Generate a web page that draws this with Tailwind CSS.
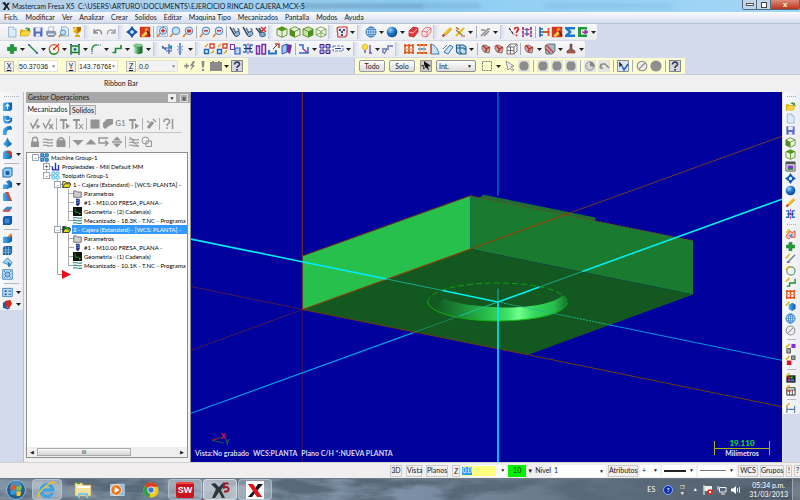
<!DOCTYPE html>
<html lang="es">
<head>
<meta charset="utf-8">
<title>Mastercam Fresa X5</title>
<script src="https://cdn.jsdelivr.net/npm/@tailwindcss/browser@4"></script>
</head>
<body class="flex h-screen flex-col overflow-hidden bg-[#f0f0f0] font-[Lato,sans-serif] text-[7px] leading-[9px] text-[#1a1a1a]">

<svg class="absolute size-0" aria-hidden="true">
  <defs>
    <radialGradient id="gBlue" cx=".35" cy=".3" r=".8"><stop offset="0" stop-color="#9fd4f8"/><stop offset=".5" stop-color="#1c72c4"/><stop offset="1" stop-color="#0a3f86"/></radialGradient>
    <linearGradient id="gSolid" x1="0" x2="1"><stop offset="0" stop-color="#4ab4f4"/><stop offset="1" stop-color="#0a58a8"/></linearGradient>
    <linearGradient id="gGreen" x1="0" x2="1"><stop offset="0" stop-color="#d8f0d8"/><stop offset=".6" stop-color="#2f8a45"/><stop offset="1" stop-color="#1b5c2b"/></linearGradient>
  </defs>
  <symbol id="new" viewBox="0 0 12 12"><path d="M2.500 1h5l2.500 2.500V11h-7.500z" fill="#dcecfb" stroke="#8aa9cc" stroke-width=".8"/><path d="M7.500 1v2.500H10" fill="#fff" stroke="#8aa9cc" stroke-width=".7"/></symbol>
  <symbol id="open" viewBox="0 0 12 12"><path d="M1 10V3.500h3l1 1h4V6" fill="#e5b21b"/><path d="M1 10l2-5h8.500l-2.500 5z" fill="#ffd83c" stroke="#b88a10" stroke-width=".5"/><path d="M6 3c1-2 3-2 4-.5l1-.8V5H8l1-1C8 3 7 3 6 3z" fill="#3c9a2a"/></symbol>
  <symbol id="save" viewBox="0 0 12 12"><path d="M1.500 1.500h9v9h-9z" fill="#5a6bc4"/><path d="M3.500 1.500h5v4h-5zM4 7.500h4v3H4z" fill="#e8ecfa"/></symbol>
  <symbol id="print" viewBox="0 0 12 12"><path d="M3 5l1-4h5l-1 4z" fill="#fff" stroke="#7b93b5" stroke-width=".6"/><path d="M1 5h9.500l1 3-2.500 3H3L1 8z" fill="#8c98a8"/><path d="M3 7.500h6v1.500H3z" fill="#dde4ec"/></symbol>
  <symbol id="preview" viewBox="0 0 12 12"><path d="M3.500.8h5l2 2V10h-7z" fill="#e2effb" stroke="#7c9cc4" stroke-width=".8"/><circle cx="5" cy="6.500" r="2.600" fill="#bfe0f8" stroke="#4a80b8" stroke-width=".9"/><path d="M3 8.500L1 11" stroke="#c87d2c" stroke-width="1.500"/></symbol>
  <symbol id="cup" viewBox="0 0 12 12"><path d="M2 1h8v3c0 2-2 3-3 3.500V9h2v2H4V9h1.500V7.500C3 7 2 5 2 4z" fill="#e8a70c"/><path d="M6 1h4v3L7 7z" fill="#a86a04"/><path d="M1 6l4-4" stroke="#ffef7a" stroke-width="1.200"/></symbol>
  <symbol id="undo" viewBox="0 0 12 12"><path d="M2 3v4h4M2.500 6.500C4 3 10 3 9.500 8.500" fill="none" stroke="#8c8c8c" stroke-width="1.400"/></symbol>
  <symbol id="redo" viewBox="0 0 12 12"><path d="M10 3v4H6M9.500 6.500C8 3 2 3 2.500 8.500" fill="none" stroke="#a0a0a0" stroke-width="1.400"/></symbol>
  <symbol id="fit" viewBox="0 0 12 12"><path d="M6 0l2.500 3.500L12 6 8.500 8.500 6 12 3.500 8.500 0 6l3.500-2.500z" fill="#1557b0"/><circle cx="6" cy="6" r="1.800" fill="#d7ecff"/></symbol>
  <symbol id="repaint" viewBox="0 0 12 12"><path d="M.8.8h10.400v10.400H.8z" fill="#d8331c"/><path d="M2 10l5-5 2 2-4 4z" fill="#ffd04a"/><circle cx="7.500" cy="3.800" r="2" fill="#f38a2c"/><path d="M8 5l3 5" stroke="#7a120a" stroke-width="1.500"/></symbol>
  <symbol id="zoom" viewBox="0 0 12 12"><circle cx="7" cy="4.800" r="3.800" fill="#bfe2f8" stroke="#4d86bd" stroke-width="1"/><path d="M4 7.500L1 11" stroke="#d98a3a" stroke-width="1.800"/></symbol>
  <symbol id="zoomp" viewBox="0 0 12 12"><path d="M1 .5h10.500v10H1z" fill="#dcebf8" stroke="#7b9ec6" stroke-width=".6"/><circle cx="7" cy="4.800" r="3.500" fill="#e2f1fc" stroke="#4d86bd"/><path d="M4 7.500L1 11" stroke="#d98a3a" stroke-width="1.800"/><path d="M5 4.800h4M7 2.800v4" stroke="#d8261c" stroke-width="1.400"/></symbol>
  <symbol id="zoomr" viewBox="0 0 12 12"><circle cx="7" cy="4.800" r="3.800" fill="#d6e8f8" stroke="#5d86bd"/><path d="M4 7.500L1 11" stroke="#d98a3a" stroke-width="1.800"/><path d="M5.200 3.500h3.600v3H5.200z" fill="#d8261c"/></symbol>
  <symbol id="zoomm" viewBox="0 0 12 12"><circle cx="7" cy="4.800" r="3.800" fill="#cfe4f6" stroke="#4d86bd"/><path d="M4 7.500L1 11" stroke="#d98a3a" stroke-width="1.800"/><path d="M5 4.800h4" stroke="#d8261c" stroke-width="1.400"/></symbol>
  <symbol id="view" viewBox="0 0 12 12"><path d="M1 1l4 7 3 2.500" fill="none" stroke="#2a3d52" stroke-width="1.500"/><path d="M4 2l3 5M8.500 6.500c2-1 2-3 0-4" fill="none" stroke="#5a7896" stroke-width="1.500"/><ellipse cx="8" cy="8" rx="3" ry="2.200" transform="rotate(-30 8 8)" fill="#8fb6d6" stroke="#2a4d72" stroke-width=".8"/></symbol>
  <symbol id="viewx" viewBox="0 0 12 12"><path d="M1 2l5 6M4 2l3 5" stroke="#34485c" stroke-width="1.500"/><ellipse cx="7.500" cy="8.500" rx="3" ry="2.200" fill="#86a9c8" stroke="#2a4d72" stroke-width=".8"/><path d="M6 1l5 5M11 1L6 6" stroke="#d22" stroke-width="1.400"/></symbol>
  <symbol id="cubet" viewBox="0 0 12 12"><path d="M6 .8l5 2.200v6L6 11.200 1 9V3z" fill="#e9f4dc" stroke="#5b8a2a" stroke-width=".9"/><path d="M1 3l5-2.200L11 3 6 5.400z" fill="#4f9a16"/><path d="M6 5.400v5.800" stroke="#5b8a2a" stroke-width=".9"/></symbol>
  <symbol id="cubel" viewBox="0 0 12 12"><path d="M6 .8l5 2.200v6L6 11.200 1 9V3z" fill="#eef6e4" stroke="#5b8a2a" stroke-width=".9"/><path d="M1 3l5 2.400v5.800L1 9z" fill="#4f8f1c"/><path d="M6 5.400L11 3" stroke="#5b8a2a" stroke-width=".9"/></symbol>
  <symbol id="cuber" viewBox="0 0 12 12"><path d="M6 .8l5 2.200v6L6 11.200 1 9V3z" fill="#c6e0a4" stroke="#5b8a2a" stroke-width=".9"/><path d="M11 3L6 5.400v5.800L11 9z" fill="#4f8f1c"/><path d="M6 5.400L1 3" stroke="#5b8a2a" stroke-width=".9"/></symbol>
  <symbol id="cubew" viewBox="0 0 12 12"><path d="M6 .8l5 2.200v6L6 11.200 1 9V3zM1 3l5 2.400L11 3M6 5.400v5.800M1 9l5-2.500L11 9" fill="#f0f7e6" stroke="#6d9a3c" stroke-width=".8"/></symbol>
  <symbol id="planes" viewBox="0 0 12 12"><path d="M1 2l2-1h8v8l-2 2H2z" fill="#f4e4e6" stroke="#c83232" stroke-width="1.100"/><path d="M3 3h2v2H3zM7 3h2v2H7zM5 5h2v2H5zM5 8h2v2H5z" fill="#28508c"/></symbol>
  <symbol id="globe" viewBox="0 0 12 12"><circle cx="6" cy="6" r="5" fill="#d4ebfa" stroke="#2a78c0"/><path d="M1 6h10M6 1v10M2 3.500h8M2 8.500h8" stroke="#2a78c0" stroke-width=".7"/><ellipse cx="6" cy="6" rx="2.300" ry="5" fill="none" stroke="#2a78c0" stroke-width=".8"/></symbol>
  <symbol id="ball" viewBox="0 0 12 12"><circle cx="6" cy="6" r="5.300" fill="url(#gBlue)"/></symbol>
  <symbol id="red" viewBox="0 0 12 12"><path d="M2 5l4-4 5 1v4l-4 5-5-1z" fill="#e23a3a" stroke="#b81c1c" stroke-width=".7"/><path d="M2 6l4 1 4-4" stroke="#ffb4b4" fill="none"/></symbol>
  <symbol id="redw" viewBox="0 0 12 12"><path d="M2 5l4-4 5 1v4l-4 5-5-1zM2 5l5 1 4-4M7 6v5" fill="#fbe6e6" stroke="#e06a6a" stroke-width=".9"/></symbol>
  <symbol id="pencil" viewBox="0 0 12 12"><path d="M3 9l7-7" stroke="#efc21c" stroke-width="2.800"/><path d="M1.500 10.500l2-2" stroke="#c83a2a" stroke-width="2.200"/><path d="M5 9l6-6" stroke="#94741a" stroke-width=".6"/></symbol>
  <symbol id="pencils" viewBox="0 0 12 12"><path d="M2 10l8-8" stroke="#e8bc1c" stroke-width="2.200"/><path d="M2 4l6 5" stroke="#98782a" stroke-width="1.400"/><path d="M7 10h4M2 1.500l3 2" stroke="#c84a2a" stroke-width="1.200"/></symbol>
  <symbol id="pencilg" viewBox="0 0 12 12"><path d="M2 10l7-7h2M5 10l5-5M2 4h4" stroke="#8f8f8f" stroke-width="1.700" fill="none"/></symbol>
  <symbol id="what" viewBox="0 0 12 12"><path d="M1 2l5 7" stroke="#223" stroke-width="1.200" stroke-dasharray="3 1"/><path d="M6.500 3.500c0-3 4.500-2.500 3.800 0C10 5 8.500 5 8.500 7M8.500 8.500v1.800" fill="none" stroke="#d8201c" stroke-width="1.600"/></symbol>
  <symbol id="pieces" viewBox="0 0 12 12"><path d="M2 1v10M10 1v10" stroke="#7a2a9a" stroke-width="1.600" stroke-dasharray="3 .8"/><path d="M3.500 3.500h5M3.500 8h5" stroke="#d6365a" stroke-width="1.500"/><path d="M6 2v8" stroke="#2a6ac8" stroke-width="1.200"/></symbol>
  <symbol id="dim" viewBox="0 0 12 12"><path d="M2 1v10M2 3h3M2 6h3M2 9h3" stroke="#1c6cc8" stroke-width="1.600"/><path d="M5 6h6M10.500 2v8" stroke="#e8541c" stroke-width="1.800"/></symbol>
  <symbol id="sum" viewBox="0 0 12 12"><path d="M1 1h10v2.500H5.500L8 6 5.500 8.500H11V11H1V9l3.500-3L1 3z" fill="#1a7ad0"/></symbol>
  <symbol id="exitg" viewBox="0 0 12 12"><path d="M1 1h9v2.500H4v5h6V11H1z" fill="#1f9a3a"/><path d="M5 6h3V4l3 2-3 2" fill="#a02ab0" stroke="#a02ab0"/></symbol>
  <symbol id="plus" viewBox="0 0 12 12"><path d="M4.300 1.500h3.400v2.800H10.500v3.400H7.700v2.800H4.300V7.700H1.500V4.300h2.800z" fill="#1f9a34" stroke="#0e6f20" stroke-width=".5"/></symbol>
  <symbol id="line" viewBox="0 0 12 12"><path d="M2 2l8 8" stroke="#208a3a" stroke-width="1.400"/><circle cx="2" cy="2" r="1" fill="#1c5ac8"/><circle cx="10" cy="10" r="1" fill="#1c5ac8"/></symbol>
  <symbol id="circle" viewBox="0 0 12 12"><circle cx="6" cy="6.300" r="4.700" fill="#eef8ee" stroke="#d2542c" stroke-width="1.200"/><path d="M1.500 8a4.700 4.700 0 0 0 8.500 1" fill="none" stroke="#2a9a44" stroke-width="1.400"/><path d="M6 6l5-5M6 5v2M5 6h2" stroke="#e02c1c" stroke-width="1.200"/></symbol>
  <symbol id="rect" viewBox="0 0 12 12"><path d="M2 3h8v6.500H2z" fill="#cfeccf" stroke="#1b7a30" stroke-width="1.500"/><path d="M6 5v3M4.500 6.300h3M1 1.500h2M9 1.500h2M1 11h2M9 11h2" stroke="#123f8c" stroke-width="1.100"/></symbol>
  <symbol id="arc" viewBox="0 0 12 12"><path d="M2 7c0-3 2-5 5-5" fill="none" stroke="#2a9a44" stroke-width="1.500"/><path d="M2 7v4M7 2h4" stroke="#5a6cb8" stroke-width="1.200" stroke-dasharray="2 .8"/></symbol>
  <symbol id="spline" viewBox="0 0 12 12"><path d="M1.500 9.500h3V5.500h5.500V2" fill="none" stroke="#228a38" stroke-width="1.700"/></symbol>
  <symbol id="cyl" viewBox="0 0 12 12"><path d="M1.500 2.500v7.500c2 1.500 7 1.500 9 0V2.500z" fill="url(#gGreen)"/><ellipse cx="6" cy="2.500" rx="4.500" ry="1.500" fill="#8ccf9a" stroke="#2a7a3c" stroke-width=".5"/></symbol>
  <symbol id="xa" viewBox="0 0 12 12"><path d="M1 5h6M1 3l4 4M8 1v10M5 8h6" stroke="#3a5aa8" stroke-width="1.200"/><path d="M7 4l4-2v5z" fill="#1c8ad0"/></symbol>
  <symbol id="xb" viewBox="0 0 12 12"><path d="M6 0v12" stroke="#3a6ad0" stroke-width="1.400"/><path d="M3 3l6 4M9 3L3 7M4 9h4" stroke="#7a92d8"/></symbol>
  <symbol id="trans" viewBox="0 0 12 12"><path d="M1.500 6.500h4v4h-4z" fill="#d8ecfa" stroke="#1b6ab8" stroke-width="1.400"/><path d="M7 1h4v4H7z" fill="#fff" stroke="#e0421c" stroke-width="1.400"/><path d="M2 4l3-3M7.500 10c2 0 3-1 3-3" fill="none" stroke="#e09a1c" stroke-width="1.200"/></symbol>
  <symbol id="copyb" viewBox="0 0 12 12"><path d="M1.500 1.500h4v5h-4z" fill="#fff" stroke="#7838b0" stroke-width="1.100"/><path d="M6 5h5v6H6z" fill="#bcd8fa" stroke="#2a5ac8" stroke-width="1.200"/></symbol>
  <symbol id="mirror" viewBox="0 0 12 12"><path d="M1 2h3v7H1M11 2H8v7h3" fill="none" stroke="#2472c8" stroke-width="1.500"/><path d="M6 0v12" stroke="#c02aa0" stroke-width="1" stroke-dasharray="3 1"/><path d="M2 5.500h8" stroke="#20306a"/></symbol>
  <symbol id="offset" viewBox="0 0 12 12"><path d="M1.500 3h3v8h-3zM7 1.500h3.500V11H7z" fill="#eee4f8" stroke="#7a2aa0" stroke-width="1.500"/></symbol>
  <symbol id="drag" viewBox="0 0 12 12"><path d="M1 7v3.500h7V7" fill="none" stroke="#1c72c8" stroke-width="1.800"/><path d="M7 1h4v4" fill="none" stroke="#d8322c" stroke-width="1.500"/><path d="M5 6l4-4" stroke="#444"/></symbol>
  <symbol id="wrap" viewBox="0 0 12 12"><path d="M1 3l5-2v8l-5 2z" fill="#a4c8f0" stroke="#2858b0"/><path d="M6 1l5 1-2 9-3-2z" fill="#7430a8"/></symbol>
  <symbol id="fold" viewBox="0 0 12 12"><path d="M1 2h4v4M1 10h9V4" fill="none" stroke="#2a6ad0" stroke-width="1.500"/><path d="M5 6l5 4" stroke="#b02a8c" stroke-width="1.500"/></symbol>
  <symbol id="four" viewBox="0 0 12 12"><path d="M1 1.500h4V5H1zM7 1.500h4V5H7zM1 7h4v3.500H1zM7 7h4v3.500H7z" fill="#b9aee6" stroke="#3a2a8c" stroke-width="1"/></symbol>
  <symbol id="slot" viewBox="0 0 12 12"><path d="M1 3h10v5H1z" fill="#fff" stroke="#4a7ac8" stroke-width="1" stroke-dasharray="3 1"/><path d="M3 5.500h6" stroke="#2a4ab0"/></symbol>
  <symbol id="bulb" viewBox="0 0 12 12"><circle cx="4" cy="4" r="2.800" fill="#ffe23c" stroke="#c49a1c" stroke-width=".6"/><path d="M3 7h2v3H3z" fill="#8a8a9a"/><path d="M9 2v8M8 10h3" stroke="#7a5ac0" stroke-width="1.500"/></symbol>
  <symbol id="arm" viewBox="0 0 12 12"><path d="M1 10V6h5V3h5" fill="none" stroke="#8a96c4" stroke-width="2"/><path d="M2 11l3-5" stroke="#5a6494" stroke-width="1.200"/></symbol>
  <symbol id="gridr" viewBox="0 0 12 12"><path d="M2 1v10M6 1v10M10 1v10M1 2.500h10M1 9.500h10" stroke="#e2541c" stroke-width="1.600"/><path d="M1 6h10" stroke="#e29a5c" stroke-width="1"/></symbol>
  <symbol id="rows" viewBox="0 0 12 12"><path d="M1 2h10M1 10h10" stroke="#e2541c" stroke-width="1.800"/><path d="M2 6h8" stroke="#4a9ad0" stroke-width="1.800"/><path d="M4 1v10M8 1v10" stroke="#efa060"/></symbol>
  <symbol id="sweep" viewBox="0 0 12 12"><path d="M2 11V1c4 1 7 5 8 10z" fill="#c8e6fa" stroke="#3a7ab8"/><path d="M2 1v10" stroke="#e05a2c" stroke-width="1.500"/></symbol>
  <symbol id="tube" viewBox="0 0 12 12"><path d="M2 9l6-7 3 2-5 7z" fill="#cfe4f8" stroke="#3f70a8"/><path d="M1 6l4-4" stroke="#5d7ea8"/></symbol>
  <symbol id="net" viewBox="0 0 12 12"><path d="M1.500 2h7L11 4v7H4L1.500 9zM1.500 5h7l2.500 2M5 2v7l2 2" fill="#b9dcf2" stroke="#22608e" stroke-width="1.100"/></symbol>
  <symbol id="crab" viewBox="0 0 12 12"><path d="M2 3l4-1 4 3-1 5-5-1-2-3z" fill="#c8aea8" stroke="#6c5c64" stroke-width=".8"/><path d="M3 2l3 4 4-2M5 9l2-3" fill="none" stroke="#c23a24" stroke-width="1.400"/></symbol>
  <symbol id="wirebox" viewBox="0 0 12 12"><path d="M1 4l3-3h7v7l-3 3H1zM1 4h7v7M8 4l3-3M4.500 4v7M1 7.500h7M4 1v3" fill="#f8f8f8" stroke="#555" stroke-width=".8"/></symbol>
  <symbol id="section" viewBox="0 0 12 12"><path d="M1 3l3-2h7v7l-3 3H2z" fill="#a9b6c6" stroke="#4c5b70" stroke-width=".8"/><path d="M2 2l8 8M2 6l4 4" stroke="#d03a2c" stroke-width="1.300"/></symbol>
  <symbol id="pin" viewBox="0 0 12 12"><path d="M5 1h2v5l3 2v2H2V8l3-2z" fill="#8d5c54" stroke="#5d3c3c" stroke-width=".6"/><path d="M3 9h6" stroke="#d04a2c" stroke-width="1.500"/></symbol>
  <symbol id="bolt" viewBox="0 0 12 12"><path d="M0 6h5M2.500 3.500v5" stroke="#8d8d8d" stroke-width="1.500"/><path d="M9 1L6 6h2L6 11l5-6H9l2-4z" fill="#8d8d8d"/></symbol>
  <symbol id="bang" viewBox="0 0 12 12"><path d="M4.500 1h3L7 7.500H5zM5 9h2.200v2H5z" fill="#8d8d8d"/></symbol>
  <symbol id="calc" viewBox="0 0 12 12"><path d="M0 2h2V1h2v1h4V1h2v1h2v9H0z" fill="#8a8a8a"/></symbol>
  <symbol id="help" viewBox="0 0 12 12"><path d="M.5.500h11v11H.5z" fill="#d6d6de" stroke="#6a6a78" stroke-width=".8"/><path d="M3.500 4.500C3.500 1 9 1.500 8.500 4.500 8 6 6 6 6 8M6 9v1.800" fill="none" stroke="#333a5c" stroke-width="1.700"/></symbol>
  <symbol id="pick" viewBox="0 0 12 12"><path d="M.5.500h11v11H.5z" fill="#c9c9c9" stroke="#777" stroke-width=".7"/><path d="M4 1l7 5-3 .5 1 4-3-3-3 2 .5-3L1 6l3-2z" fill="#151515"/><path d="M3 3l2 5" stroke="#eee" stroke-width=".8"/></symbol>
  <symbol id="marq" viewBox="0 0 12 12"><path d="M1.500 1.500h9v9h-9z" fill="none" stroke="#777" stroke-dasharray="2 1"/></symbol>
  <symbol id="curs" viewBox="0 0 12 12"><path d="M2 1l8 5-3 .5L10 10l-1.500 1L6 8l-2 2z" fill="#eee" stroke="#8a8a8a" stroke-width=".9"/></symbol>
  <symbol id="blob" viewBox="0 0 12 12"><path d="M0 0h12v12H0z" fill="#e6e6e0"/><path d="M3.500 1.500h5l2 2.500v4l-2 2.500h-5L1.500 8V4z" fill="#8c8c8c"/></symbol>
  <symbol id="pie" viewBox="0 0 12 12"><path d="M0 0h12v12H0z" fill="#e6e6e0"/><circle cx="6" cy="6" r="4.300" fill="#d4d4d4" stroke="#949494"/><path d="M6 6V1.700a4.300 4.300 0 0 1 4 5.300z" fill="#858585"/></symbol>
  <symbol id="bend" viewBox="0 0 12 12"><path d="M0 0h12v12H0z" fill="#e6e6e0"/><path d="M2 8l2-4 3 0 4 4M2 8l1-4M2 8h3" fill="none" stroke="#8c8c8c" stroke-width="1.500"/></symbol>
  <symbol id="verify" viewBox="0 0 12 12"><path d="M.5.500h11v11H.5z" fill="#dde6f2" stroke="#6a7688" stroke-width=".8"/><path d="M5 6l2 4 4-6" fill="none" stroke="#2464c0" stroke-width="1.600"/><path d="M2 1.500l4 4-2 .3-1.500 1.700z" fill="#222"/></symbol>
  <symbol id="no" viewBox="0 0 12 12"><circle cx="6" cy="6" r="4.800" fill="#eee" stroke="#8c8c8c" stroke-width="1.100"/><path d="M3 9l6-6" stroke="#8c8c8c" stroke-width="1.100"/></symbol>
  <symbol id="disc" viewBox="0 0 12 12"><circle cx="6" cy="6" r="5.600" fill="#8f8f8f"/></symbol>
  <symbol id="extr" viewBox="0 0 12 12"><path d="M1 3l2-1.500h8V9l-2 2H1z" fill="url(#gSolid)"/><path d="M6 9V4M4 6l2-2.500L8 6" stroke="#fff" fill="none" stroke-width="1.200"/></symbol>
  <symbol id="revo" viewBox="0 0 12 12"><path d="M1 3h7l3 3v3l-3 2.500H3L1 8z" fill="url(#gSolid)"/><path d="M2 3.500c3-3 7-1 7 2M3 7c2 2 4 2 6 0" stroke="#dff2ff" fill="none" stroke-width="1.200"/></symbol>
  <symbol id="swp" viewBox="0 0 12 12"><path d="M1 11V7c0-4 4-6 9-6l1 4c-4 0-6 1-6 4v2z" fill="url(#gSolid)"/></symbol>
  <symbol id="loft" viewBox="0 0 12 12"><path d="M6 .5l2 4 3 3L6 11.500 1 7.500l3-3z" fill="url(#gSolid)"/></symbol>
  <symbol id="fillet" viewBox="0 0 12 12"><path d="M1 4l2-2h5c2 0 3 2 3 4v3l-2 2H1z" fill="url(#gSolid)"/><path d="M6 1.500c3 0 5 1.500 5 5L9 8C9 5 8 4 5 4z" fill="#e23a28"/></symbol>
  <symbol id="shell" viewBox="0 0 12 12"><path d="M1 3l2-2h8v8l-2 2H1z" fill="#8ccaf4" stroke="#1762a8"/><path d="M4 4.500h4v4H4z" fill="#1a5aa0"/></symbol>
  <symbol id="bool" viewBox="0 0 12 12"><path d="M1 6h6v5H1zM4 3l4-2 3 3v5l-4 1V6z" fill="url(#gSolid)"/></symbol>
  <symbol id="draft" viewBox="0 0 12 12"><path d="M1 11V3l3-2 7 10z" fill="url(#gSolid)"/><path d="M4 1h3l4 10H9z" fill="#e2402c"/></symbol>
  <symbol id="slab" viewBox="0 0 12 12"><path d="M1 8l4-4h6l-3 4z" fill="#3b84d8"/><path d="M1 8h7v1.500H1zM8 8l3-4v1.500L8 9.500z" fill="#c0392f"/></symbol>
  <symbol id="cubeb" viewBox="0 0 12 12"><path d="M1 3l2-2h8v8l-2 2H1z" fill="#145ba8"/><path d="M3 4h5v5H3z" fill="#3b8ad8"/></symbol>
  <symbol id="feat" viewBox="0 0 12 12"><path d="M1 4h8l2-1v6l-3 2H1z" fill="url(#gSolid)"/><path d="M6 4l4-4 1 3-3 2z" fill="#e27a28"/></symbol>
  <symbol id="mesh" viewBox="0 0 12 12"><path d="M1 3l2-2h8v8l-2 2H1z" fill="#2463a0"/><path d="M1 5.500h9M1 8h9M4 2v9M7 2v9" stroke="#90c6ec" stroke-width=".8"/></symbol>
  <symbol id="sheet" viewBox="0 0 12 12"><path d="M1 6l5-5 5 5-3 5-2-3z" fill="#a9d3f2" stroke="#3c88c0"/><path d="M6 5l4 3-3 3z" fill="#2c79b8"/></symbol>
  <symbol id="hist" viewBox="0 0 12 12"><path d="M.8.800h10.400v10.400H.8z" fill="#cfe4f6" stroke="#3f83c0"/><circle cx="6" cy="6" r="2.800" fill="#8fc0ea" stroke="#2a70b4"/><path d="M2 2l1.500 1.500M10 2L8.500 3.500M2 10l1.500-1.500M10 10L8.500 8.500" stroke="#2a70b4"/></symbol>
  <symbol id="list" viewBox="0 0 12 12"><path d="M.800 1.500h10.400v9H.8z" fill="#bddcf6" stroke="#3f83c0"/><path d="M3 3.500h2v2H3zM3 7h2v2H3z" fill="#1c4f90"/><path d="M7 4.500h3M7 8h3" stroke="#1c4f90"/></symbol>
  <symbol id="solidr" viewBox="0 0 12 12"><path d="M1 4l4-2v7l4 1-3 1.500-5-2z" fill="#1c5ca8"/><path d="M4 2l5-1 2 4-3 5-4-2z" fill="#d02a20"/></symbol>
  <symbol id="mach" viewBox="0 0 12 12"><path d="M1 1h10v10H1z" fill="#ddd" stroke="#5a5a5a"/><path d="M1 1h10v2.500H1z" fill="#555"/><path d="M3 5h6v4H3z" fill="#7a3ac8"/><path d="M3 9h6" stroke="#2a9a3a" stroke-width="1.500"/></symbol>
  <symbol id="q1" viewBox="0 0 12 12"><path d="M1 8l4-6 3 2 3-2v7H6l-2 2z" fill="#f4c0b0" stroke="#e04a2c"/><path d="M4 7l4-2v5z" fill="#4a9ae0"/><path d="M1 4l4-4" stroke="#e8c41c" stroke-width="1.500"/></symbol>
  <symbol id="qline" viewBox="0 0 12 12"><path d="M3 10l8-8" stroke="#5a8a8c" stroke-width="1.500"/><path d="M1 6l4-5" stroke="#e8b41c" stroke-width="1.800"/><path d="M2 10h3" stroke="#7a4ac0" stroke-width="1.500"/></symbol>
  <symbol id="qcirc" viewBox="0 0 12 12"><circle cx="6.500" cy="6.500" r="4.500" fill="none" stroke="#57955a" stroke-width="1.200"/><path d="M1 5l4-4" stroke="#e8b41c" stroke-width="1.800"/></symbol>
  <symbol id="qspl" viewBox="0 0 12 12"><path d="M2 10h3V6.500h6V2" fill="none" stroke="#228a38" stroke-width="1.500"/><path d="M1 5l4-4" stroke="#e8b41c" stroke-width="1.800"/></symbol>
  <symbol id="qsol" viewBox="0 0 12 12"><path d="M4 4l4-2 3.500 2v4.500L8 11 4 9z" fill="url(#gSolid)"/><path d="M1 5l4-4" stroke="#e8b41c" stroke-width="1.800"/></symbol>
  <symbol id="qgrey" viewBox="0 0 12 12"><path d="M2 6h4v5H2z" fill="#aaa" stroke="#555"/><path d="M7 1h4.500v4.500H7z" fill="#8a2ae8"/><path d="M1 5l4-4" stroke="#e8b41c" stroke-width="1.800"/></symbol>
  <symbol id="qred" viewBox="0 0 12 12"><path d="M2 6h5v5H2z" fill="#d8182c"/><path d="M7 1h4v4H7z" fill="#999" stroke="#555"/><path d="M1 5l4-4" stroke="#e8b41c" stroke-width="1.800"/></symbol>
  <symbol id="qcol" viewBox="0 0 12 12"><path d="M1.500 2.500h10v8h-10z" fill="#222"/><path d="M3 4h2.500v2H3z" fill="#e33"/><path d="M6 4h2.500v2H6z" fill="#3c3"/><path d="M3 7h2.500v2H3z" fill="#e3e"/><path d="M6 7h4v2H6z" fill="#38e"/><path d="M1 4l4-4" stroke="#e8b41c" stroke-width="1.800"/></symbol>
  <symbol id="qtab" viewBox="0 0 12 12"><path d="M2 3h9v8H2z" fill="#fff" stroke="#222"/><path d="M2 5.500h9M5 5.500V11M8 5.500V11" stroke="#222" stroke-width=".8"/><path d="M3 7h3" stroke="#e33" stroke-width="1.500"/><path d="M1 4l4-4" stroke="#e8b41c" stroke-width="1.800"/></symbol>
  <symbol id="qdim" viewBox="0 0 12 12"><path d="M2 3v8M10.500 3v8M2 7h8.500" stroke="#5a7a9c" stroke-width="1.200"/><path d="M1 4l4-4" stroke="#e8b41c" stroke-width="1.500"/></symbol>
  <symbol id="chk" viewBox="0 0 12 12"><path d="M1.500 5l2.500 5 5-9" fill="none" stroke="#949494" stroke-width="1.600"/><path d="M7.500 6l4 2.500-4 2.500z" fill="#949494"/></symbol>
  <symbol id="chkx" viewBox="0 0 12 12"><path d="M1 5l2.500 5 5-9M7 6l4 5M11 6l-4 5" fill="none" stroke="#949494" stroke-width="1.400"/></symbol>
  <symbol id="tp" viewBox="0 0 12 12"><path d="M1 2h7M4.500 2v9" stroke="#949494" stroke-width="1.800"/><path d="M7 5l4 3-4 3z" fill="#949494"/></symbol>
  <symbol id="tx" viewBox="0 0 12 12"><path d="M1 2h7M4.500 2v9" stroke="#949494" stroke-width="1.800"/><path d="M7 6l4 5M11 6l-4 5" stroke="#949494" stroke-width="1.200"/></symbol>
  <symbol id="gsq" viewBox="0 0 12 12"><path d="M1.500 1.500h9v9h-9z" fill="#949494"/></symbol>
  <symbol id="grock" viewBox="0 0 12 12"><path d="M1 5l4-4h6v5l-4 2-4 3-2-2z" fill="#949494"/></symbol>
  <symbol id="brush" viewBox="0 0 12 12"><path d="M3 10l5-6" stroke="#949494" stroke-width="3"/><path d="M2 3l3 2M8 1l3 3" stroke="#949494" stroke-width="1.300"/></symbol>
  <symbol id="gq" viewBox="0 0 12 12"><path d="M2 4c0-4 6-4 5.500 0C7 6 5 5.500 5 8M5 9.200v1.800M10.500 1v10" fill="none" stroke="#949494" stroke-width="1.500"/></symbol>
  <symbol id="lock" viewBox="0 0 12 12"><path d="M2 5.500h8V11H2z" fill="#949494"/><path d="M3.500 6V3.500c0-3 5-3 5 0V6" fill="none" stroke="#949494" stroke-width="1.300"/></symbol>
  <symbol id="waves" viewBox="0 0 12 12"><path d="M1 3.500c3-2 4 2 10 0M1 6.500c3-2 4 2 10 0M1 9.500c3-2 4 2 10 0" fill="none" stroke="#949494" stroke-width="1.100"/></symbol>
  <symbol id="wavex" viewBox="0 0 12 12"><path d="M1 3.500c3-2 4 2 10 0M1 6.500c3-2 4 2 10 0M1 9.500c3-2 4 2 10 0M2 1l8 10" fill="none" stroke="#949494" stroke-width="1.100"/></symbol>
  <symbol id="ghost" viewBox="0 0 12 12"><path d="M1.500 5q0-1 1-1V3q3.500-4 7 0v1q1 0 1 1v6h-9z" fill="#949494"/><path d="M4 4q2-2 4 0" fill="none" stroke="#eee"/></symbol>
  <symbol id="down" viewBox="0 0 12 12"><path d="M.5 4h11L6 9.500z" fill="#949494"/></symbol>
  <symbol id="up" viewBox="0 0 12 12"><path d="M.5 8.500h11L6 3z" fill="#949494"/></symbol>
  <symbol id="ins" viewBox="0 0 12 12"><path d="M10 2H1v5h8M7 4.500L10 7 7 10" fill="none" stroke="#949494" stroke-width="1.400"/></symbol>
  <symbol id="updn" viewBox="0 0 12 12"><path d="M6 .5l4 4H2zM6 11.500l4-4H2zM1 5.200h10v1.600H1z" fill="#949494"/></symbol>
  <symbol id="link" viewBox="0 0 12 12"><circle cx="4.500" cy="4.500" r="3.500" fill="none" stroke="#949494"/><path d="M5 5h5.500v5.500H5z" fill="none" stroke="#949494"/></symbol>
  <symbol id="group" viewBox="0 0 12 12"><path d="M1 1h4v4H1zM7 1h4v4H7zM1 7h4v4H1zM7 7h4v4H7z" fill="#35b6e8" stroke="#124a9a"/><path d="M5 6h2M6 5v2" stroke="#124a9a"/></symbol>
  <symbol id="props" viewBox="0 0 12 12"><path d="M2 11V6M6 11V1M10 11V4M1 10.500h10" stroke="#2330c8" stroke-width="1.800"/></symbol>
  <symbol id="tgroup" viewBox="0 0 12 12"><circle cx="3.300" cy="3.300" r="2.200" fill="#d0f6ff" stroke="#1898d8"/><circle cx="8.700" cy="3.300" r="2.200" fill="#d0f6ff" stroke="#1898d8"/><circle cx="3.300" cy="8.700" r="2.200" fill="#d0f6ff" stroke="#1898d8"/><circle cx="8.700" cy="8.700" r="2.200" fill="#d0f6ff" stroke="#1898d8"/></symbol>
  <symbol id="fold1" viewBox="0 0 12 12"><path d="M1 10V2h3.500l1 1.500H10V5" fill="#ffe94a" stroke="#222"/><path d="M1 10l2.500-5H12L9.500 10z" fill="#e8d820" stroke="#222"/></symbol>
  <symbol id="fold2" viewBox="0 0 12 12"><path d="M1 10V2h3.500l1 1.500H10V5" fill="#1c6a3c" stroke="#111"/><path d="M1 10l2.500-5H12L9.500 10z" fill="#e8d820" stroke="#111"/><path d="M5 2l5 6" stroke="#28a848" stroke-width="2"/></symbol>
  <symbol id="par" viewBox="0 0 12 12"><path d="M1 2.500h3.500l1 1.500H11v7H1z" fill="#cfcfcf" stroke="#555"/></symbol>
  <symbol id="tool" viewBox="0 0 12 12"><path d="M4 1h5v7L6.500 11 4 9z" fill="#20307c"/><path d="M4 4l5-2M4 7l5-2" stroke="#8aa6e8"/></symbol>
  <symbol id="geo" viewBox="0 0 12 12"><path d="M0 0h12v12H0z" fill="#0c160c"/><path d="M3 2v5h5" stroke="#2cb03c" fill="none"/><path d="M8 9h2" stroke="#d8d838" stroke-width="1.500"/></symbol>
  <symbol id="nc" viewBox="0 0 12 12"><path d="M0 2.500c4-2 5 2 12 0M0 6c4-2 5 2 12 0M0 9.500c4-2 5 2 12 0" fill="none" stroke="#2c8a86" stroke-width="1.500"/></symbol>
</svg>

<header class="relative flex h-3 shrink-0 items-center overflow-hidden bg-linear-to-r from-[#bcd3ea] via-[#8ccdf3] to-[#a3d6f5] text-[#14202c]">
  <div class="absolute top-1 left-75 h-1 w-31 bg-[#44688a]/45 blur-[2px]"></div>
  <div class="absolute top-1 left-106 h-1 w-14 bg-[#44688a]/25 blur-[2px]"></div>
  <div class="absolute top-1 right-32 h-1 w-32 bg-[#3f86bb]/20 blur-[2px]"></div>
  <svg class="mx-0.5 size-2" viewBox="0 0 10 10" aria-hidden="true"><path d="M0 1l4 4-3 5h3l2-3 2 3h2L7 5l3-4H7L5.500 3 4 0z" fill="#202428"/></svg>
  <h1 class="relative whitespace-pre">Mastercam Fresa X5  C:\USERS\ARTURO\DOCUMENTS\EJERCICIO RINCAD CAJERA.MCX-5</h1>
  <div class="relative ml-auto flex h-2.5 self-start overflow-hidden rounded-b-xs border border-t-0 border-[#4e6a84]">
    <button aria-label="Minimizar" class="flex w-3.5 items-center justify-center border-r border-[#4e6a84] bg-[#c2d6e8]"><span class="h-[3px] w-2 border border-[#555] bg-white"></span></button>
    <button aria-label="Restaurar" class="flex w-3.5 items-center justify-center border-r border-[#4e6a84] bg-[#c2d6e8]"><span class="size-1.5 border border-[#444] bg-white"></span></button>
    <button aria-label="Cerrar" class="flex w-7 items-center justify-center bg-linear-to-b from-[#dd8c7a] to-[#b83218] text-[8px] font-bold text-white">x</button>
  </div>
</header>

<nav aria-label="Menú principal" class="flex h-3 shrink-0 items-center gap-[7px] border-b border-[#b9c2d2] bg-linear-to-b from-[#fafbfd] to-[#d4dcec] px-1">
  <a href="#">Fich.</a><a href="#">Modificar</a><a href="#">Ver</a><a href="#">Analizar</a><a href="#">Crear</a><a href="#">Solidos</a><a href="#">Editar</a><a href="#">Maquina Tipo</a><a href="#">Mecanizados</a><a href="#">Pantalla</a><a href="#">Modos</a><a href="#">Ayuda</a>
</nav>

<div class="shrink-0 bg-[#d3daec]">
  <div class="flex h-4 w-fit items-center rounded-r-xs bg-linear-to-b from-[#f8f8f9] to-[#ebecef]" role="toolbar" aria-label="Archivo y vistas" data-tools="e,new Nuevo,open Abrir,save Guardar,print Imprimir,preview Vista previa,cup Asistente,g,undo Deshacer,redo Rehacer,g,fit Ajustar,repaint Repintar,s,zoomp Zoom ventana,zoom Zoom objetivo,zoomr Zoom seleccionado,s,zoomm Reducir,zoomm Reducir 0.8,s,view Rotar,view Plano rotado,viewx Anular vista,g,cubet Vista superior,cubel Vista frontal,cuber Vista lateral,cubew Vista isométrica,g,planes Planos,v,g,globe Alambre,v,ball Sombreado,v,red Color,redw Limpiar colores,g,pencil Borrar,pencils Borrar duplicados,v,s,pencilg Recuperar,v,g,what Analizar entidad,pieces Analizar cadena,s,dim Distancia,repaint Repintado,sum Estadística,exitg Salir,v"></div>
  <div class="mt-px flex h-4 w-fit items-center rounded-r-xs bg-linear-to-b from-[#f8f8f9] to-[#ebecef]" role="toolbar" aria-label="Crear geometría" data-tools="e,plus Punto,v,line Línea,v,circle Círculo,v,rect Rectángulo,v,arc Empalme,v,spline Spline,v,cyl Primitivas,v,g,xa Recortar,xb Romper,v,g,trans Trasladar,trans Trasladar 3D,copyb Rotar copia,mirror Espejo,offset Escala,drag Arrastrar,wrap Enrollar,s,fold Encajar,v,four Matriz,slot Ranura,v,g,bulb Ocultar,v,arm Articular,g,gridr Superficie red,rows Superficie reglada,sweep Superficie barrida,tube Superficie tubo,net Superficie malla,v,s,crab Recortar superficie,crab Extender superficie,wirebox Caja,s,crab Dividir,v,section Sección,v,pin Fijar,v"></div>
  <div class="mt-px flex h-4 items-stretch">
    <div class="flex w-62 shrink-0 items-center bg-[#fdfdd0] pl-1">
      <label for="cx" class="mr-1 w-2.5 border border-[#bbb] bg-[#f1f1f1] text-center underline">X</label>
      <div class="flex w-10 items-center border border-[#e4e4d8] bg-white"><input id="cx" value="50.37036" class="h-2.5 w-8 bg-transparent font-['Liberation_Sans',sans-serif] outline-none"><span class="text-[5px] text-[#888]">▼</span></div>
      <label for="cy" class="mr-0.5 ml-2 w-2.5 border border-[#bbb] bg-[#f1f1f1] text-center underline">Y</label>
      <div class="flex w-10 items-center border border-[#e4e4d8] bg-white"><input id="cy" value="143.76768" class="h-2.5 w-8 bg-transparent font-['Liberation_Sans',sans-serif] outline-none"><span class="text-[5px] text-[#888]">▼</span></div>
      <label for="cz" class="mr-0.5 ml-2 w-2.5 border border-[#bbb] bg-[#f1f1f1] text-center underline">Z</label>
      <div class="flex w-10 items-center border border-[#e4e4d8] bg-[#f3f3f3]"><input id="cz" value="0.0" class="h-2.5 w-8 bg-transparent font-['Liberation_Sans',sans-serif] outline-none"><span class="text-[5px] text-[#888]">▼</span></div>
      <div class="flex items-center" data-tools="e,bolt Punto rápido,bang Atención,calc Calculadora,v,help Ayuda posición"></div>
    </div>
    <div class="ml-26.5 flex items-center border-l border-[#bfc3cc] bg-[#fdfdd0] pr-1 pl-1">
      <button class="h-3 w-6.5 rounded-xs border border-[#9a9a9a] bg-linear-to-b from-white to-[#dcdcdc] leading-none">Todo</button>
      <button class="ml-1 h-3 w-6.5 rounded-xs border border-[#9a9a9a] bg-linear-to-b from-white to-[#dcdcdc] leading-none">Solo</button>
      <div class="ml-1 flex" data-tools="pick Selección"></div>
      <div class="relative mr-1 ml-1 w-10">
        <select aria-label="Modo de selección" class="block h-3 w-full appearance-none rounded-xs border border-[#8e8e8e] bg-linear-to-b from-white to-[#dcdcdc] px-0.5 leading-none"><option>Int.</option></select>
        <span class="pointer-events-none absolute top-0.5 right-1 text-[5px] leading-2">▼</span>
      </div>
      <div class="flex items-center gap-px" data-tools="marq Ventana,v,curs Cursor,blob Sólido,s,blob Cara,blob Arista,blob Cuerpo,s,pie Validar,bend Último,s,verify Verificar,s,no Cancelar,disc Terminar,s,help Ayuda selección"></div>
    </div>
  </div>
</div>

<div class="flex h-4.5 shrink-0 items-center border-t border-[#c9ccd4] pl-26">Ribbon Bar</div>

<main class="flex min-h-0 flex-1">
  <aside class="w-6 shrink-0 border-r border-[#b9bfcc] bg-[#d3daec]">
    <div class="flex flex-col rounded-b-xs bg-linear-to-r from-[#fafafc] to-[#eceef3]" role="toolbar" aria-label="Sólidos" data-column="g,extr Extruir,revo Revolución,swp Barrido,loft Solevar,fillet+ Empalme sólido,s,shell Vaciado,bool+ Booleana,draft Desmoldeo,slab Recorte,cubeb Espesar,s,feat Buscar características,mesh Red,sheet Quitar caras,hist Historial,s,list+ Administrador,solidr+ Transferir"></div>
  </aside>

  <section aria-label="Gestor Operaciones" class="flex w-[167px] shrink-0 flex-col border-r border-[#8f8f8f] bg-[#f0f0f0] pl-0.5">
    <div class="flex h-[11px] shrink-0 items-center bg-[#a8a8a8] pl-0.5">
      <h2 class="mr-auto">Gestor Operaciones</h2>
      <button aria-label="Opciones" class="mr-1 h-2 w-2 bg-[#eee] text-[5px] leading-2">▼</button>
      <button aria-label="Cerrar panel" class="mr-0.5 h-2 w-2 border border-[#ddd] text-[7px] leading-1.5">x</button>
    </div>
    <div class="flex h-3 shrink-0 items-end">
      <button class="h-3 w-11 border-r border-[#999] bg-[#f8f8f8]">Mecanizados</button>
      <button class="h-2.5 w-6.5 border border-b-0 border-[#aaa] bg-[#e3e3e3] leading-none">Solidos</button>
    </div>
    <div class="mr-2 ml-0.5 flex h-4.5 shrink-0 items-center border-b border-[#c4c4c4]" role="toolbar" aria-label="Operaciones" data-tools="chk Seleccionar todo,chkx Deseleccionar,s,tp Regenerar,tx Regenerar sucias,s,gsq Simular,grock Verificar sólido,G1 Postprocesar,tp Alta velocidad,s,brush Borrar todo,s,gq Ayuda operaciones"></div>
    <div class="mr-2 mb-px ml-0.5 flex h-4.5 shrink-0 items-center" role="toolbar" aria-label="Orden" data-tools="lock Bloquear,waves Mostrar trayectoria,ghost Apagar,s,down Bajar,up Subir,ins Insertar,updn Desplazar,s,wavex Ver solo,link Asociar"></div>
    <div class="mr-0.5 flex min-h-0 flex-1 flex-col border border-[#8e8e8e] bg-white">
      <ul id="tree" class="flex-1 overflow-hidden pl-1 text-[6px] whitespace-nowrap text-black"></ul>
      <div class="flex h-2.5 shrink-0 items-center bg-[#efefef]">
        <button aria-label="Desplazar a la izquierda" class="w-2.5 text-[5px] leading-none">◀</button>
        <div class="flex h-2 w-23.5 items-center justify-center border border-[#aaa] bg-linear-to-b from-[#f8f8f8] to-[#d4d4d4] text-[5px] leading-none">III</div>
        <button aria-label="Desplazar a la derecha" class="ml-auto w-2.5 text-[5px] leading-none">▶</button>
      </div>
    </div>
    <div class="h-1 shrink-0"></div>
  </section>

  <section aria-label="Vista gráfica" class="relative min-w-0 flex-1 overflow-hidden bg-[#00009c]">
    <svg class="size-full" viewBox="191 92 592 371" preserveAspectRatio="xMidYMid slice" fill="none" aria-label="Pieza con cajera circular">
      <defs>
        <linearGradient id="pocket" x1="435" x2="568" y1="0" y2="0" gradientUnits="userSpaceOnUse"><stop offset="0" stop-color="#125820"/><stop offset=".18" stop-color="#1c8435"/><stop offset=".4" stop-color="#28c04c"/><stop offset=".55" stop-color="#40e266"/><stop offset=".63" stop-color="#70ff90"/><stop offset=".75" stop-color="#35d85c"/><stop offset=".9" stop-color="#28bc4b"/><stop offset="1" stop-color="#18702c"/></linearGradient>
      </defs>
      <path d="M303 310L191 351M303 310L191 287" stroke="#4c1850"/>
      <path d="M302.500 92V257" stroke="#7a3818"/>
      <path d="M302.500 310V463" stroke="#30106c" stroke-width="1.500"/>
      <path d="M498.500 92V196" stroke="#0060b8" stroke-width="1.600"/>
      <path d="M480 198l4-3 112 23v5z" fill="#1c6e34"/>
      <path d="M303 256.500L471 196V249.500L303 310z" fill="#28c04c"/>
      <path d="M471 196L694 241V295L471 249.500z" fill="#1a7a30"/>
      <path d="M303 310L471 249.500 694 295 529 355.500z" fill="#125820"/>
      <path d="M563 296C555 304 530 308 510 308C490 308 460 306 445 299L432 307C442 317 468 321.500 498 321.500C540 321.500 568 314 567.500 302C567.500 299 565 297 563 296z" fill="url(#pocket)"/>
      <path d="M428.300 302.500C428.300 312 458 321.500 498 321.500C538 321.500 567.800 313 567.800 302.500" stroke="#12b010"/>
      <path d="M428.300 302.500C428.300 292 458 283.500 498 283.500C538 283.500 567.800 292 567.800 302.500" stroke="#10a010" stroke-dasharray="6 3"/>
      <path d="M471 196L694 241" stroke="#b02818" stroke-dasharray="2 2" stroke-width=".8"/>
      <path d="M302.500 256.500L471 196M302.500 256.500V310L529 355.500 783 407.500" stroke="#703c10"/>
      <path d="M303 310L471 249.500 570 213.500" stroke="#8a4408" stroke-width="1.200"/>
      <path d="M570 213.500L783 136.500" stroke="#743830"/>
      <path d="M191 239.500L387 279.500" stroke="#00ecff" stroke-width="1.600"/>
      <path d="M387 279.500L443 291" stroke="#18a888"/>
      <path d="M443 291L498.500 302.500" stroke="#00f4f0" stroke-width="1.600"/>
      <path d="M498.500 302.500L608 325" stroke="#18b890" stroke-dasharray="2 1"/>
      <path d="M608 325L783 361" stroke="#0098e0"/>
      <path d="M191 414L413 333.500" stroke="#00a0e8" stroke-width="1.200"/>
      <path d="M413 333.500L460 316.500" stroke="#188860"/>
      <path d="M460 316.500L498.500 302.500" stroke="#18c898"/>
      <path d="M498.500 302.500L540 287.500M583 272L783 199.500" stroke="#00f0f0" stroke-width="1.600"/>
      <path d="M540 287.500L583 272" stroke="#18a080" stroke-width="1.200"/>
      <path d="M498.500 289V302" stroke="#189880" stroke-width="1.500"/>
      <path d="M498.500 302V463" stroke="#00ecff" stroke-width="1.600"/>
      <path d="M212 441l10-3M212 441l12 3" stroke="#186040"/><path d="M212 441l7-2" stroke="#a01030"/>
    </svg>
    <p class="absolute bottom-5.5 left-7.5 text-[7px] leading-none font-bold text-[#e01830]">X</p>
    <p class="absolute bottom-4 left-8.5 text-[7px] leading-none font-bold text-[#187830]">Y</p>
    <p class="absolute bottom-1 left-1 flex gap-1 font-bold whitespace-nowrap text-[#d8d8f0]"><span>Vista:No grabado</span><span>WCS:PLANTA</span><span>Plano C/H *:NUEVA PLANTA</span></p>
    <div class="absolute right-3 bottom-1 w-14 text-center font-bold">
      <div class="absolute top-0.5 h-3.5 w-full border-x border-[#b0b020]"></div>
      <p class="border-b border-[#b0b020] text-[8px] text-[#00f020]">19.110</p>
      <p class="text-[#e0e0f0]">Milímetros</p>
    </div>
  </section>

  <aside class="w-4.5 shrink-0 border-l border-[#e4e4ea] bg-[#d3daec]">
    <div class="flex flex-col rounded-b-xs bg-linear-to-r from-[#fafafc] to-[#eceef3]" role="toolbar" aria-label="Accesos rápidos" data-column="g,open Abrir archivo,new Archivo nuevo,save Guardar archivo,cubel Frontal,cubet Superior,mach Máquina,fit Ajustar pantalla,ball Sombrear,pencil Borrar entidad,mirror Reflejar,g,q1 Máscara todo,plus Máscara puntos,qline Máscara líneas,qcirc Máscara arcos,qspl Máscara splines,gridr Máscara superficies,qsol Máscara sólidos,globe Máscara alámbrica,no Máscara nula,s,qgrey Máscara grupo,qred Máscara resultado,s,qcol Máscara color,qtab Máscara nivel,s,qdim Máscara acotación"></div>
  </aside>
</main>

<footer class="flex h-4 shrink-0 items-center justify-end border-t border-[#d2cfcf] bg-[#f0eeee]">
  <button class="mr-1 h-3 w-3 border border-[#ccc] leading-none">3D</button>
  <button class="mr-1 h-3 w-4 border border-[#ccc] leading-none">Vista</button>
  <button class="mr-1 h-3 w-5.5 border border-[#ccc] leading-none">Planos</button>
  <label for="zd" class="mr-0.5 border border-[#ccc] px-px leading-2.5">Z</label>
  <div class="flex h-3 w-11 items-center bg-white"><div class="flex h-2.5 w-8.5 items-center bg-[#ffff80]"><input id="zd" value="0.0" class="h-2 w-2.5 bg-[#3399ff] text-white outline-none"></div><span class="ml-1 text-[5px] leading-none">▼</span></div>
  <button aria-label="Color 10" class="ml-0.5 h-3 w-4.5 bg-[#00f000] leading-none">10</button>
  <span class="w-2 text-center text-[6px] leading-none">▼</span>
  <label for="niv" class="px-px">Nivel</label>
  <div class="relative w-13.5"><select id="niv" class="block h-3 w-full appearance-none bg-white px-0.5 leading-none"><option>1</option></select><span class="pointer-events-none absolute top-0.5 right-0.5 text-[5px] leading-2">▼</span></div>
  <button class="mx-0.5 h-3 w-7.5 border border-[#ccc] leading-none">Atributos</button>
  <button aria-label="Estilo de punto" class="flex h-3 w-5 items-center justify-between bg-white px-0.5 leading-none"><span>+</span><span class="text-[5px]">▼</span></button>
  <button aria-label="Estilo de línea" class="ml-0.5 flex h-3 w-8.5 items-center justify-between bg-white px-0.5"><span class="h-0.5 w-5.5 bg-[#222]"></span><span class="text-[5px] leading-none">▼</span></button>
  <button aria-label="Grosor de línea" class="ml-0.5 flex h-3 w-9.5 items-center justify-between bg-white px-0.5"><span class="h-px w-6.5 bg-[#777]"></span><span class="text-[5px] leading-none">▼</span></button>
  <button class="ml-0.5 h-3 w-5 border border-[#ccc] leading-none">WCS</button>
  <button class="ml-0.5 h-3 w-6 border border-[#ccc] leading-none">Grupos</button>
  <button class="ml-0.5 h-3 w-1.5 border border-[#ccc] leading-none">!</button>
  <button class="ml-0.5 h-3 w-1.5 border border-r-0 border-[#ccc] leading-none">?</button>
</footer>

<div role="navigation" aria-label="Barra de tareas" class="relative flex h-5.5 shrink-0 items-center overflow-hidden border-t border-[#6e7a86] bg-linear-to-r from-[#8494a4] via-[#7d90a6] via-50% to-[#4a5661]">
  <svg class="absolute inset-0 size-full" viewBox="0 0 800 22" preserveAspectRatio="none" aria-hidden="true">
    <filter id="marble" x="0" y="0" width="1" height="1"><feTurbulence type="fractalNoise" baseFrequency=".018 .07" numOctaves="4" seed="7"/><feColorMatrix values="0 0 0 0 .1  0 0 0 0 .14  0 0 0 0 .19  0 3.500 0 0 -1.350"/></filter>
    <rect width="800" height="22" filter="url(#marble)"/>
  </svg>
  <div class="relative flex h-full items-center [&_button]:flex [&_button]:h-full [&_button]:items-center [&_button]:justify-center">
    <button aria-label="Inicio" class="w-8"><svg class="size-5" viewBox="0 0 20 20"><circle cx="10" cy="10" r="9.500" fill="#245f8c" stroke="#8cc0e0"/><circle cx="10" cy="7" r="6" fill="#68aad4" opacity=".6"/><path d="M5 6q2-1.500 4.500-.5V10Q7 9 4.500 10z" fill="#e8552c"/><path d="M10.500 6q2 1 5-.5L15 10q-2 1-4.500.2z" fill="#82c341"/><path d="M4.500 11Q7 10 9.500 11v4.500Q7 14 4.500 15z" fill="#2c9fe0"/><path d="M10.500 11.300q2 1 4.500-.3l-.5 4.500q-2 1-4 .3z" fill="#fbc42c"/></svg></button>
    <button aria-label="Internet Explorer" class="w-7.5 rounded-sm border border-[#b9c9d8]/70 bg-white/35"><svg class="size-5" viewBox="0 0 20 20"><path d="M15.500 13a6 6 0 1 1 .5-3H5" fill="none" stroke="#35a4e8" stroke-width="3"/><path d="M2 17C-1 13 15-1 18 3" fill="none" stroke="#f5c32c" stroke-width="1.600"/></svg></button>
    <button aria-label="Explorador" class="ml-1 w-8.5"><svg class="size-5" viewBox="0 0 20 20"><path d="M2 3h7l1 2h8v11H2z" fill="#f3e1a0" stroke="#c4a040" stroke-width=".6"/><path d="M4 6h13v2H4z" fill="#fff"/><path d="M4 3h3" stroke="#28a040" stroke-width="2"/><path d="M5 18v-5h10v5h-2v-3H7v3z" fill="#7cc8ee"/></svg></button>
    <button aria-label="Reproductor multimedia" class="w-8.5"><svg class="size-4" viewBox="0 0 20 20"><path d="M2 3h17v14H2z" fill="#86bde0" stroke="#bfe0f4"/><circle cx="9" cy="10" r="6.800" fill="#f07818" stroke="#fff"/><path d="M7 6l6 4-6 4z" fill="#fff"/></svg></button>
    <button aria-label="Chrome" class="w-8.5"><svg class="size-4" viewBox="0 0 20 20"><circle cx="10" cy="10" r="9.500" fill="#f3c718"/><path d="M10 10L2 5a9.500 9.500 0 0 1 16.500 1H10z" fill="#dd3a2a"/><path d="M10 10l-2 9.500A9.500 9.500 0 0 1 2 5z" fill="#35a04a"/><circle cx="10" cy="10" r="4.400" fill="#fff"/><circle cx="10" cy="10" r="3.400" fill="#3c78d8"/></svg></button>
    <button aria-label="SolidWorks" class="w-8.5 rounded-sm border border-[#b9c9d8]/70 bg-white/25"><span class="flex h-4 w-4.5 items-center justify-center rounded-xs border-t-2 border-[#f04a3c] bg-[#c8141c] font-['Liberation_Sans',sans-serif] text-[9px] leading-none font-bold text-white">SW</span></button>
    <button aria-label="Mastercam X5" class="ml-px w-8.5 rounded-sm border border-[#dfe6ec]/80 bg-white/45"><svg class="h-4 w-5" viewBox="0 0 20 16"><path d="M1 2l5 5-4 9h3l4-6 3 6h3L11 8l5-7h-3L9 5 5 1z" fill="#303438"/><path d="M18.500 1.500h-4.500v4q4-1.500 4.500 1.500T14 9.500" fill="none" stroke="#9c1a24" stroke-width="2"/></svg></button>
    <button aria-label="Mastercam" class="ml-px w-8.5 rounded-sm border border-[#b9c9d8]/70 bg-white/25"><svg class="h-4.5 w-4.5" viewBox="0 0 18 18"><path d="M0 0h18v18H0z" fill="#fff"/><path d="M12 3h5l-6 7 5 6h-4l-3-4-3 4H2l6-7z" fill="#181818"/><path d="M2 3h5l9 13h-5z" fill="#e0141c"/></svg></button>
  </div>
  <div class="relative ml-auto flex h-full items-center gap-1 text-white">
    <span class="mr-1">ES</span>
    <button aria-label="Ayuda del sistema" class="size-2.5 rounded-full border border-[#8ab0f0] bg-[#1430b0] text-[6px] leading-none font-bold">?</button>
    <span class="flex w-2.5 flex-col items-center text-[5px] leading-1.5"><span>❐</span><span>▼</span></span>
    <button aria-label="Iconos ocultos" class="w-2 text-[5px] leading-none">▲</button>
    <svg class="size-2.5" viewBox="0 0 10 10" aria-label="Centro de actividades"><path d="M1 0v10" stroke="#fff"/><path d="M1.500 1H9v5H1.500z" fill="#eee"/><circle cx="7" cy="7" r="2.800" fill="#e02820"/><path d="M6 6l2 2M8 6L6 8" stroke="#fff"/></svg>
    <svg class="size-2.5" viewBox="0 0 10 10" aria-label="Red"><path d="M2.500 2.500H9V7H2.500zM4 9h4M1 1v4" fill="none" stroke="#f0f0f0"/></svg>
    <svg class="mr-1 size-2.5" viewBox="0 0 10 10" aria-label="Volumen"><path d="M0 3.500h2L5 1v8L2 6.500H0z" fill="#fff"/><path d="M6.500 3v4M8.500 2v6" stroke="#fff" stroke-width=".8"/></svg>
    <time class="text-center leading-[9px] whitespace-nowrap" datetime="2013-03-31T17:34">05:34 p.m.<br>31/03/2013</time>
    <button aria-label="Mostrar escritorio" class="h-full w-2 border-l border-[#9aa6b0] bg-white/15"></button>
  </div>
</div>

<script>
const icon = id => id === 'G1'
  ? '<span class="text-[8px] font-bold text-[#949494]">G1</span>'
  : `<svg class="size-3 shrink-0" aria-hidden="true"><use href="#${id}"/></svg>`;
const caret = '<svg class="h-[3px] w-[5px] shrink-0" viewBox="0 0 5 3" aria-hidden="true"><path d="M0 0h5L2.500 3z" fill="#222"/></svg>';

// Horizontal bars: g = grip, s = separator, v = drop-down arrow, e = leading space
document.querySelectorAll('[data-tools]').forEach(bar => {
  bar.innerHTML = bar.dataset.tools.split(',').map(t => {
    if (t === 'e') return '<span class="w-[5px] shrink-0"></span>';
    if (t === 'g') return '<span class="mx-px h-3.5 w-1.5 shrink-0 border-l border-[#c3cbe0] bg-linear-to-r from-[#d7ddec] to-[#f2f3f7]"></span>';
    if (t === 's') return '<span class="flex w-1 shrink-0 justify-center"><span class="h-3 w-px bg-[#aab0ba]"></span></span>';
    if (t === 'v') return `<button aria-label="Más opciones" class="flex h-3 w-2 shrink-0 items-center justify-center">${caret}</button>`;
    const [id, ...label] = t.split(' ');
    return `<button aria-label="${label.join(' ')}" class="flex h-3.5 w-[13px] shrink-0 items-center justify-center">${icon(id)}</button>`;
  }).join('');
});

// Vertical bars: a plus after the icon adds a drop-down arrow
document.querySelectorAll('[data-column]').forEach(bar => {
  bar.innerHTML = bar.dataset.column.split(',').map(t => {
    if (t === 'g') return '<span class="mx-1 flex h-2 items-center"><span class="w-full border-t border-dotted border-[#a8adb8]"></span></span>';
    if (t === 's') return '<span class="mx-1 flex h-1.5 items-center"><span class="h-px w-full bg-[#b4b8c0]"></span></span>';
    const [id, ...label] = t.split(' ');
    return `<button aria-label="${label.join(' ')}" class="flex h-3 items-center gap-[3px] pl-0.5"><svg class="size-[11px] shrink-0" aria-hidden="true"><use href="#${id.replace('+', '')}"/></svg>${id.endsWith('+') ? caret : ''}</button>`;
  }).join('');
});

const op = (label, folder, geo, size, sel) => ({ label, icon: folder, open: '-', sel, kids: [
  { label: 'Parametros', icon: 'par' }, { label: '#1 - M10.00 FRESA_PLANA -', icon: 'tool' },
  { label: `Geometria - (${geo}) Cadena(s)`, icon: 'geo' }, { label: `Mecanizado - ${size}K - T.NC - Programa`, icon: 'nc' }] });
const data = [{ label: 'Machine Group-1', icon: 'group', open: '-', kids: [
  { label: 'Propiedades - Mill Default MM', icon: 'props', open: '+' },
  { label: 'Toolpath Group-1', icon: 'tgroup', open: '-', kids: [
    op('1 - Cajera (Estandard) - [WCS: PLANTA] -', 'fold1', 2, '18.3', false),
    op('2 - Cajera (Estandard) - [WCS: PLANTA] -', 'fold2', 1, '10.1', true),
    { label: '', icon: 'arrow' }] }] }];
const node = (n, last, root) => `<li class="relative">
  ${root ? '' : `<span class="absolute top-0 left-[4px] border-l border-[#a8a8a8] ${last ? 'h-[5px]' : 'h-full'}"></span>`}
  <span class="absolute top-[4px] left-[4px] w-[6px] border-t border-[#a8a8a8]"></span>
  <div class="relative flex h-[9px] items-center">
    <span class="flex w-[9px] shrink-0 justify-center">${n.open ? `<span class="flex size-[7px] items-center justify-center border border-[#9aa4b4] bg-white text-[6px] leading-none">${n.open}</span>` : ''}</span>
    ${n.icon === 'arrow' ? '<svg class="size-[9px]" viewBox="0 0 9 9" aria-hidden="true"><path d="M0 0l9 4.500L0 9z" fill="#e8101c"/></svg>' : `<svg class="size-[9px] shrink-0" aria-hidden="true"><use href="#${n.icon}"/></svg>`}
    <span class="ml-px h-[9px] px-px ${n.sel ? 'grow bg-[#3399ff] text-white' : ''}">${n.label}</span>
  </div>
  ${n.kids ? `<ul class="pl-[11px]">${n.kids.map((k, i) => node(k, i === n.kids.length - 1)).join('')}</ul>` : ''}
</li>`;
document.getElementById('tree').innerHTML = data.map(n => node(n, true, true)).join('');
</script>
</body>
</html>
